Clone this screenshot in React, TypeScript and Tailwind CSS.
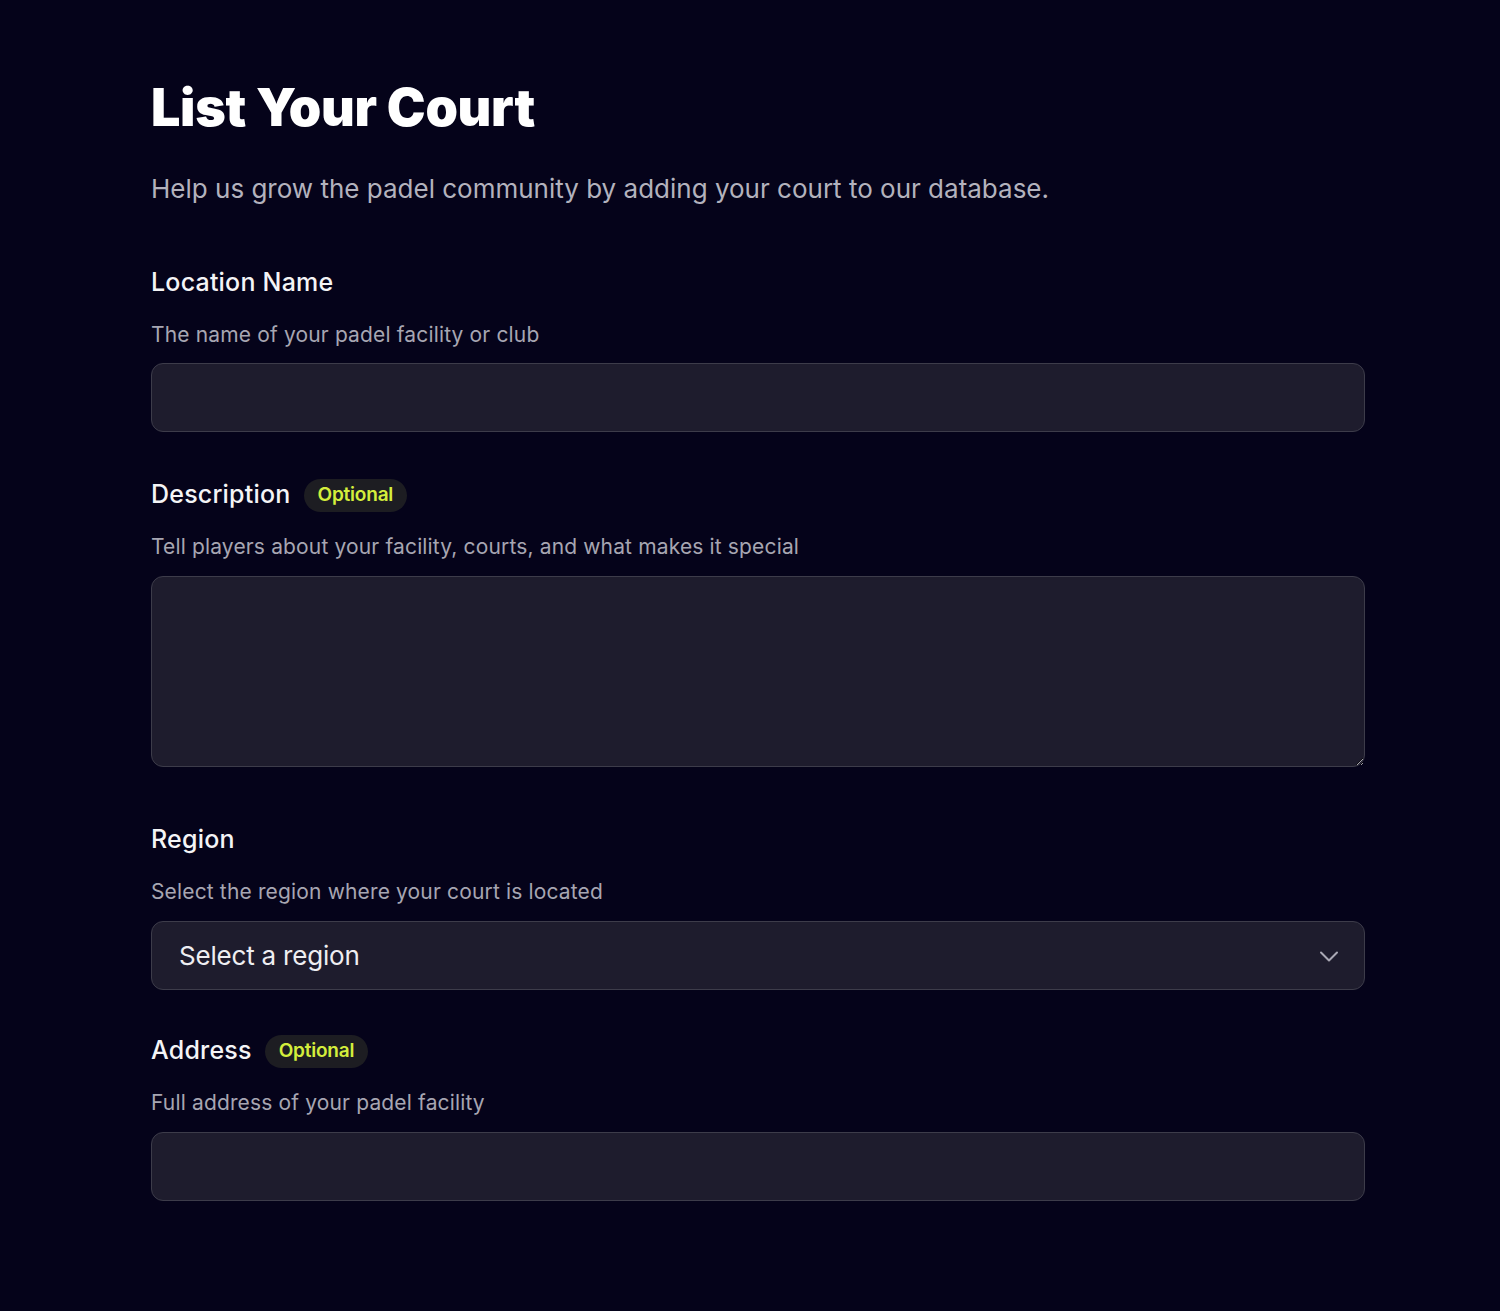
import React from "react";

const font = { fontFamily: "Inter, 'Noto Sans', sans-serif" };

function Badge() {
  return (
    <span className="ml-[13px] inline-flex h-[33px] items-center rounded-full bg-[#1d1d22] px-[14px] text-[19px] font-semibold tracking-[-0.2px] text-[#d4ee3c]">
      Optional
    </span>
  );
}

function Label({ text, optional }: { text: string; optional?: boolean }) {
  return (
    <div className="flex h-[34px] items-center">
      <span className="text-[25px] font-medium tracking-[0.2px] text-[#f4f4f6]">{text}</span>
      {optional && <Badge />}
    </div>
  );
}

function Hint({ text }: { text: string }) {
  return (
    <p className="mt-[18px] h-[34px] text-[21px] leading-[34px] tracking-[0.15px] text-[#a7a6b2]">{text}</p>
  );
}

export default function App() {
  return (
    <div style={font} className="min-h-[1311px] w-full bg-[#05031a]">
      <div className="ml-[151px] flex w-[1214px] flex-col pt-[78px]">
        <h1 className="text-[52px] font-black leading-[60px] tracking-[-0.3px] text-white">List Your Court</h1>
        <p className="mt-[34px] text-[26px] leading-[34px] tracking-[0px] text-[#b3b2bd]">
          Help us grow the padel community by adding your court to our database.
        </p>

        <div className="mt-[60px]">
          <Label text="Location Name" />
          <Hint text="The name of your padel facility or club" />
          <input className="mt-[11px] block h-[69px] w-full rounded-[12px] border border-[#3d3c4a] bg-[#1e1c2d] px-[27px] text-[24px] text-white outline-none" />
        </div>

        <div className="mt-[46px]">
          <Label text="Description" optional />
          <Hint text="Tell players about your facility, courts, and what makes it special" />
          <textarea className="mt-[12px] block h-[191px] w-full rounded-[12px] border border-[#3d3c4a] bg-[#1e1c2d] px-[27px] py-[16px] text-[24px] text-white outline-none" />
        </div>

        <div className="mt-[56px]">
          <Label text="Region" />
          <Hint text="Select the region where your court is located" />
          <div className="mt-[12px] flex h-[69px] w-full items-center justify-between rounded-[12px] border border-[#3d3c4a] bg-[#1e1c2d] pl-[27px] pr-[23px]">
            <span className="text-[26px] tracking-[-0.2px] text-[#eeeef2]">Select a region</span>
            <svg width="24" height="24" viewBox="0 0 24 24" fill="none" stroke="#a9a8b4" strokeWidth="2" strokeLinecap="round" strokeLinejoin="round">
              <path d="M4 8.5l8 8 8-8" />
            </svg>
          </div>
        </div>

        <div className="mt-[44px]">
          <Label text="Address" optional />
          <Hint text="Full address of your padel facility" />
          <input className="mt-[12px] block h-[69px] w-full rounded-[12px] border border-[#3d3c4a] bg-[#1e1c2d] px-[27px] text-[24px] text-white outline-none" />
        </div>
      </div>
    </div>
  );
}
